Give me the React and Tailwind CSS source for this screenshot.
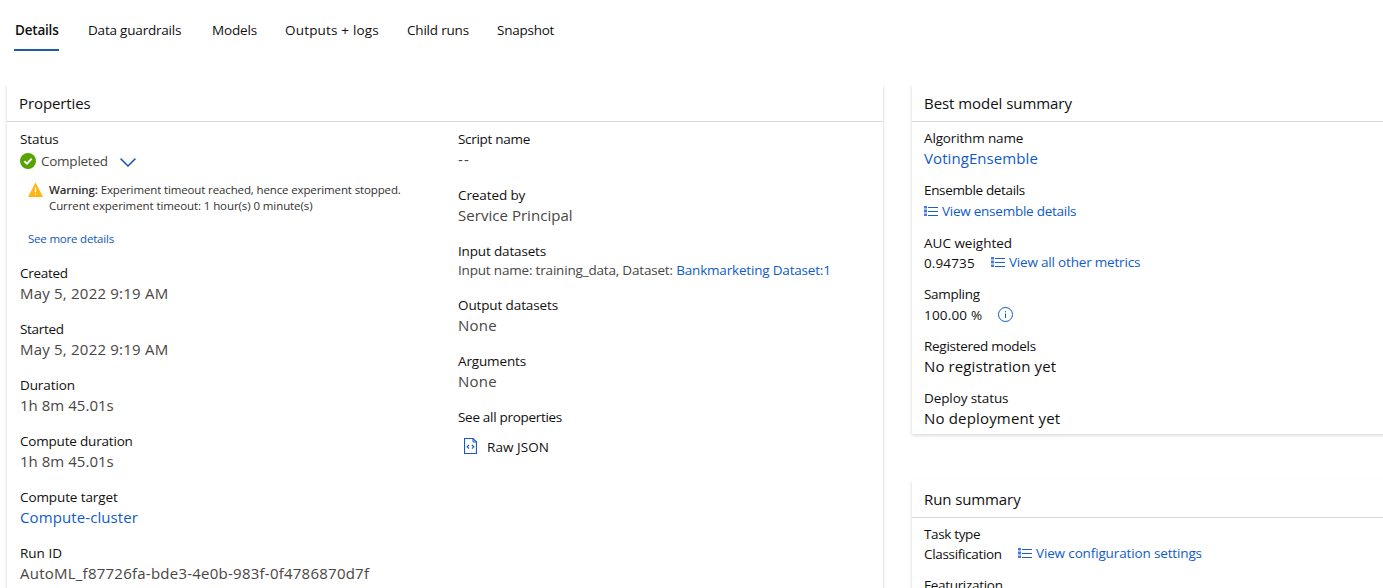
import React from "react";

function Field({ name, nameClass = "", children, valueClass = "text-[15px] text-[#484644]", className = "h-14" }) {
  return (
    <div className={`flex flex-col items-start ${className}`}>
      <span className={`block h-5 whitespace-nowrap text-[13.5px] leading-5 text-[#11100f] ${nameClass}`}>{name}</span>
      <div className={`h-5 whitespace-nowrap leading-5 ${valueClass}`}>{children}</div>
    </div>
  );
}

function ListIcon() {
  return (
    <svg width="14" height="10" viewBox="0 0 14 10" className="shrink-0" fill="#1a5fcf" shapeRendering="crispEdges">
      <path d="M0 0h3v10H0z" opacity=".4" />
      <path d="M0 0h3v2H0zM0 4h3v2H0zM0 8h3v2H0z" opacity=".7" />
      <path d="M4 1h10v1H4zM4 5h10v1H4zM4 9h10v1H4z" />
    </svg>
  );
}

function ListLink({ children, className = "" }) {
  return (
    <a className="flex h-5 items-center gap-1 text-[13.5px] leading-5 text-[#0f5cc8]">
      <ListIcon />
      <span className={className}>{children}</span>
    </a>
  );
}

function Card({ title, titleClass = "", className = "", headerClass = "pl-3", children }) {
  return (
    <section className={`bg-white shadow-[0_1.6px_3.6px_rgba(0,0,0,0.17),0_0.3px_1px_rgba(0,0,0,0.14)] ${className}`}>
      <h2 className={`h-[38px] border-b border-[#d9d9d9] text-[15px] leading-[39px] text-[#11100f] ${headerClass}`}>
        <span className={titleClass}>{title}</span>
      </h2>
      {children}
    </section>
  );
}

const tabs = [
  { name: "Details", box: "w-[73px]", text: "font-semibold tracking-[-0.2px]", active: true },
  { name: "Data guardrails", box: "w-[124px]", text: "tracking-[-0.2px]" },
  { name: "Models", box: "w-[73px]", text: "tracking-[-0.15px]" },
  { name: "Outputs + logs", box: "w-[122px]", text: "tracking-[0.18px]" },
  { name: "Child runs", box: "w-[90px]", text: "tracking-[-0.2px]" },
  { name: "Snapshot", box: "w-[80px]", text: "tracking-[-0.25px]" },
];

const grey = "text-[15px] text-[#484644]";
const black = "text-[15px] text-[#11100f]";
const link = "text-[15px] text-[#0f5cc8]";

export default function App() {
  return (
    <div className="h-[588px] w-[1383px] overflow-hidden bg-white font-['Open_Sans','Noto_Sans',sans-serif]">
      <nav className="flex h-[84px] pl-[15px] pt-5">
        {tabs.map((t) => (
          <div key={t.name} className={`h-[31px] whitespace-nowrap text-[13.5px] leading-[21px] text-[#11100f] ${t.box}`}>
            <span className={t.text}>{t.name}</span>
            {t.active && <div className="-ml-px mt-2 h-0.5 w-[45px] bg-[#1b5aa8]" />}
          </div>
        ))}
      </nav>

      <main className="flex gap-[29px] pl-[7px]">
        <Card title="Properties" titleClass="tracking-[-0.1px]" className="h-[600px] w-[876px] shrink-0">
          <div className="flex pl-[13px] pt-[7px]">
            <div className="w-[438px]">
              <span className="block h-5 text-[13.5px] leading-5 tracking-[-0.1px] text-[#11100f]">Status</span>
              <div className="mt-0.5 flex h-5 items-center text-[13.5px] text-[#484644]">
                <svg width="16" height="16" viewBox="0 0 16 16">
                  <circle cx="8" cy="8" r="8" fill="#57a300" />
                  <path d="M4.3 8.2 7 10.7 11.7 5.6" fill="none" stroke="#fff" strokeWidth="2" />
                </svg>
                <span className="ml-[5px] w-[79px] tracking-[-0.25px]">Completed</span>
                <svg width="16" height="9" viewBox="0 0 16 9" className="mt-0.5">
                  <path d="M.6.6 8 8 15.4.6" fill="none" stroke="#1b5abf" strokeWidth="1.5" />
                </svg>
              </div>
              <div className="mt-[11px] flex h-8 pl-2 text-[11.5px] leading-4 text-[#323130]">
                <svg width="15" height="15" viewBox="0 0 15 15" className="mr-[6px]">
                  <path d="M7.5.5 15 15H0z" fill="#fcb713" />
                  <path d="M7.5 5.5v4.7M7.5 11.4v1.3" stroke="#fff" strokeWidth="1.2" />
                </svg>
                <p className="whitespace-nowrap">
                  <span className="tracking-[-0.13px]"><b className="font-semibold">Warning:</b> Experiment timeout reached, hence experiment stopped.</span>
                  <br />
                  <span className="tracking-[-0.09px]">Current experiment timeout: 1 hour(s) 0 minute(s)</span>
                </p>
              </div>
              <a className="mb-4 ml-2 mt-[17px] block h-4 text-[11.5px] leading-4 tracking-[-0.2px] text-[#0f58b8]">See more details</a>
              <Field name="Created" nameClass="tracking-[-0.3px]" valueClass={`${grey} tracking-[0.21px]`}>May 5, 2022 9:19 AM</Field>
              <Field name="Started" nameClass="tracking-[-0.3px]" valueClass={`${grey} tracking-[0.21px]`}>May 5, 2022 9:19 AM</Field>
              <Field name="Duration" nameClass="tracking-[-0.1px]" valueClass={`${grey} tracking-[0.03px]`}>1h 8m 45.01s</Field>
              <Field name="Compute duration" nameClass="tracking-[-0.19px]" valueClass={`${grey} tracking-[0.03px]`}>1h 8m 45.01s</Field>
              <Field name="Compute target" nameClass="tracking-[-0.1px]" valueClass={`${link} tracking-[0.1px]`}>Compute-cluster</Field>
              <Field name="Run ID" valueClass={`${grey} tracking-[0.24px]`}>AutoML_f87726fa-bde3-4e0b-983f-0f4786870d7f</Field>
            </div>
            <div>
              <Field name="Script name" nameClass="tracking-[-0.3px]" valueClass={`${grey} tracking-[1.2px]`}>--</Field>
              <Field name="Created by" nameClass="tracking-[-0.1px]" valueClass={`${grey} tracking-[0.04px]`}>Service Principal</Field>
              <Field name="Input datasets" nameClass="tracking-[-0.16px]" className="h-[54px]" valueClass="-mt-px text-[13.5px] text-[#484644] tracking-[-0.185px]">
                Input name: training_data, Dataset: <a className="text-[#0f5cc8]">Bankmarketing Dataset:1</a>
              </Field>
              <Field name="Output datasets" nameClass="tracking-[-0.12px]" valueClass={`${grey} tracking-[0.25px]`}>None</Field>
              <Field name="Arguments" nameClass="tracking-[-0.14px]" valueClass={`${grey} tracking-[0.25px]`}>None</Field>
              <span className="block h-5 text-[13.5px] leading-5 tracking-[-0.3px] text-[#11100f]">See all properties</span>
              <div className="mt-[10px] flex h-5 items-center pl-[6px] text-[13.5px] leading-5 text-[#11100f]">
                <svg width="13" height="16" viewBox="0 0 13 16" fill="none" stroke="#1b5ab5" className="-mt-0.5 mr-[10px]">
                  <path d="M.5.5h8.5l3.5 3.5v11.500H.5z" strokeWidth="1.2" />
                  <path d="M9 .5V4h3.500" />
                  <path d="M5 7 3.200 8.800 5 10.600M8 7l1.800 1.800L8 10.600" strokeWidth="1.200" />
                </svg>
                <span className="tracking-[0.05px]">Raw JSON</span>
              </div>
            </div>
          </div>
        </Card>

        <div className="flex w-[500px] shrink-0 flex-col gap-[46px]">
          <Card title="Best model summary" titleClass="tracking-[-0.05px]" className="h-[350px]">
            <div className="pl-3 pt-[6px]">
              <Field name="Algorithm name" nameClass="tracking-[-0.15px]" className="h-[52px]" valueClass={`${link} tracking-[0.08px]`}>VotingEnsemble</Field>
              <Field name="Ensemble details" nameClass="tracking-[-0.35px]" className="h-[53px]" valueClass="pt-px">
                <ListLink className="tracking-[-0.25px]">View ensemble details</ListLink>
              </Field>
              <Field name="AUC weighted" className="h-[51px]" valueClass="flex text-[13.5px] text-[#11100f]">
                <span className="w-[67px] tracking-[0.13px]">0.94735</span>
                <div className="-mt-px"><ListLink className="tracking-[-0.19px]">View all other metrics</ListLink></div>
              </Field>
              <Field name="Sampling" nameClass="tracking-[-0.3px]" className="h-[52px]" valueClass="flex items-center pt-px text-[13.5px] text-[#11100f]">
                <span className="w-[74px] tracking-[0.18px]">100.00 %</span>
                <svg width="15" height="15" viewBox="0 0 15 15" fill="none" stroke="#0f5cc8" className="-mt-px">
                  <circle cx="7.5" cy="7.5" r="7" />
                  <path d="M7.5 6.5v4.5M7.5 4v1.3" />
                </svg>
              </Field>
              <Field name="Registered models" nameClass="tracking-[-0.28px]" className="h-[52px]" valueClass={`${black} tracking-[0.1px]`}>No registration yet</Field>
              <Field name="Deploy status" nameClass="tracking-[-0.1px]" className="h-[52px]" valueClass={`${black} tracking-[0.17px]`}>No deployment yet</Field>
            </div>
          </Card>
          <Card title="Run summary" titleClass="tracking-[-0.1px]" className="h-[300px]">
            <div className="pl-3 pt-[6px]">
              <Field name="Task type" nameClass="tracking-[-0.35px]" className="h-[51px]" valueClass="flex text-[13.5px] text-[#11100f]">
                <span className="w-[94px] tracking-[-0.32px]">Classification</span>
                <div className="-mt-px"><ListLink className="tracking-[-0.14px]">View configuration settings</ListLink></div>
              </Field>
              <Field name="Featurization" nameClass="tracking-[-0.3px]" />
            </div>
          </Card>
        </div>
      </main>
    </div>
  );
}
